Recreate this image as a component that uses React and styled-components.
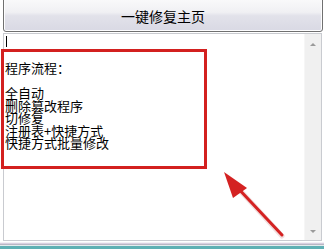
import React from "react";
import styled, { createGlobalStyle } from "styled-components";

const Global = createGlobalStyle`
  html, body { margin: 0; padding: 0; background: #fff; }
  body { width: 324px; height: 249px; overflow: hidden; font-family: "Noto Sans CJK SC", "Noto Sans", sans-serif; }
`;

const Page = styled.div`
  position: relative;
  width: 324px;
  height: 249px;
  display: flex;
  flex-direction: column;
  overflow: hidden;
`;

const TopButton = styled.button`
  margin: -4px 1px 0 3px;
  height: 36px;
  flex: none;
  border: 1px solid #707070;
  border-radius: 3px;
  background: linear-gradient(#fbfbfc 0%, #f0f0f3 45%, #e2e2ea 55%, #d9d9e4 100%);
  box-shadow: inset 0 0 0 1px #fdfdfe;
  font-family: "Noto Sans CJK SC", sans-serif;
  font-size: 14px;
  color: #000;
  padding: 3px 0 0 0;
  display: flex;
  align-items: center;
  justify-content: center;
`;

const Box = styled.div`
  margin: 1px 2px 0 3px;
  height: 207px;
  border: 1px solid #c9cbd0;
  display: flex;
  background: #fff;
`;

const Content = styled.div`
  flex: 1;
  padding: 1px 0 0 1px;
  font-size: 13px;
  line-height: 12.5px;
  color: #000;
`;

const Caret = styled.div`
  width: 1px;
  height: 11px;
  margin: 1px 0 15px 1px;
  background: #000;
`;

const Line = styled.div`
  height: 12.5px;
  white-space: nowrap;
`;

const Scrollbar = styled.div`
  width: 16px;
  background: #f0f0f0;
  border-left: 1px solid #f6f6f6;
  display: flex;
  flex-direction: column;
  justify-content: space-between;
  align-items: center;
  padding: 9px 0 7px;
`;

const Arrow = styled.div`
  width: 0;
  height: 0;
  border-left: 3px solid transparent;
  border-right: 3px solid transparent;
  ${(p) =>
    p.$up
      ? "border-bottom: 3px solid #9a9a9a;"
      : "border-top: 3px solid #9a9a9a;"}
`;

const Footer = styled.div`
  flex: none;
  display: flex;
  flex-direction: column;
  margin-top: 1px;
`;

const Stripe = styled.div`
  height: ${(p) => p.$h}px;
  background: ${(p) => p.$c};
`;

const RedFrame = styled.div`
  position: absolute;
  left: 1px;
  top: 49px;
  width: 200px;
  height: 114px;
  border: 3px solid #d3201f;
  pointer-events: none;
`;

const Overlay = styled.svg`
  position: absolute;
  left: 0;
  top: 0;
  pointer-events: none;
`;

export default function App() {
  const lines = ["全自动", "删除篡改程序", "切修复", "注册表+快捷方式", "快捷方式批量修改"];
  return (
    <Page>
      <Global />
      <TopButton>一键修复主页</TopButton>
      <Box>
        <Content>
          <Caret />
          <Line>程序流程：</Line>
          <Line />
          {lines.map((l) => (
            <Line key={l}>{l}</Line>
          ))}
        </Content>
        <Scrollbar>
          <Arrow $up />
          <Arrow />
        </Scrollbar>
      </Box>
      <Footer>
        <Stripe $h={1} $c="#f3f1f5" />
        <Stripe $h={1} $c="#d9cfe0" />
        <Stripe $h={1} $c="#b8b8c4" />
        <Stripe $h={1} $c="#e4ecee" />
        <Stripe $h={3} $c="#5fb0b4" />
      </Footer>
      <RedFrame />
      <Overlay width="324" height="249" viewBox="0 0 324 249">
        <line x1="282" y1="236" x2="236" y2="186" stroke="#d8a0a0" strokeWidth="5" strokeLinecap="round" opacity="0.35" />
        <line x1="282" y1="235" x2="234" y2="184" stroke="#d42222" strokeWidth="3" strokeLinecap="round" />
        <polygon points="224,172 247,188 233,198" fill="#d42222" />
      </Overlay>
    </Page>
  );
}
